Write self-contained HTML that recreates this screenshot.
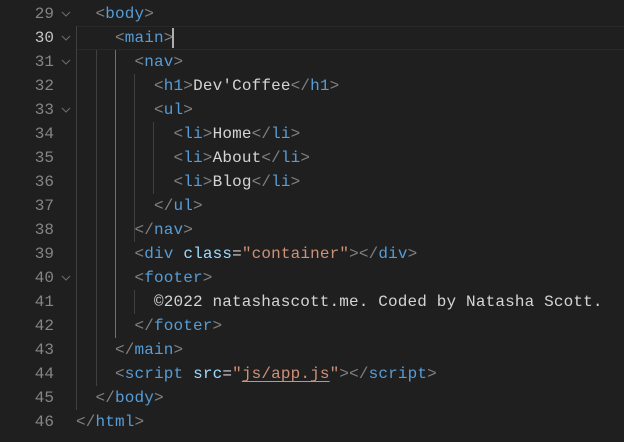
<!DOCTYPE html><html><head><style>
body{margin:0;width:624px;height:442px;background:#1f1f1f;overflow:hidden;position:relative;font-family:"Liberation Mono",monospace;font-size:16px}
.l{position:absolute;left:0;height:24px;line-height:24px;white-space:pre;width:624px}
.n{position:absolute;right:570px;color:#858585;text-align:right}
.c{position:absolute;left:76px;color:#d4d4d4;letter-spacing:0.15px}
.f{position:absolute;left:61px;top:9px;width:10px;height:6px}
.p{color:#808080}.t{color:#569cd6}.a{color:#9cdcfe}.s{color:#ce9178}
.g{position:absolute;width:1px;background:#404040}
</style></head><body>
<div style="position:absolute;left:76px;top:26px;width:548px;height:22px;border-top:1px solid #282828;border-bottom:1px solid #282828"></div>
<div class="g" style="left:76px;top:26px;height:384px"></div>
<div class="g" style="left:96px;top:50px;height:336px"></div>
<div class="g" style="left:115px;top:50px;height:288px;background:#707070"></div>
<div class="g" style="left:134px;top:74px;height:168px"></div>
<div class="g" style="left:134px;top:290px;height:24px"></div>
<div class="g" style="left:153px;top:122px;height:72px"></div>
<svg width="0" height="0" style="position:absolute"><defs><symbol id="ch" viewBox="0 0 10 6"><path d="M1 1L5 5L9 1" fill="none" stroke="#6e6e6e" stroke-width="1"/></symbol></defs></svg>
<div class="l" style="top:2px"><span class="n">29</span><svg class="f"><use href="#ch"/></svg><span class="c">  <span class="p">&lt;</span><span class="t">body</span><span class="p">&gt;</span></span></div>
<div class="l" style="top:26px"><span class="n" style="color:#c6c6c6">30</span><svg class="f"><use href="#ch"/></svg><span class="c">    <span class="p">&lt;</span><span class="t">main</span><span class="p">&gt;</span></span><div style="position:absolute;left:172px;top:2px;width:2px;height:20px;background:#aeafad"></div></div>
<div class="l" style="top:50px"><span class="n">31</span><svg class="f"><use href="#ch"/></svg><span class="c">      <span class="p">&lt;</span><span class="t">nav</span><span class="p">&gt;</span></span></div>
<div class="l" style="top:74px"><span class="n">32</span><span class="c">        <span class="p">&lt;</span><span class="t">h1</span><span class="p">&gt;</span>Dev'Coffee<span class="p">&lt;/</span><span class="t">h1</span><span class="p">&gt;</span></span></div>
<div class="l" style="top:98px"><span class="n">33</span><svg class="f"><use href="#ch"/></svg><span class="c">        <span class="p">&lt;</span><span class="t">ul</span><span class="p">&gt;</span></span></div>
<div class="l" style="top:122px"><span class="n">34</span><span class="c">          <span class="p">&lt;</span><span class="t">li</span><span class="p">&gt;</span>Home<span class="p">&lt;/</span><span class="t">li</span><span class="p">&gt;</span></span></div>
<div class="l" style="top:146px"><span class="n">35</span><span class="c">          <span class="p">&lt;</span><span class="t">li</span><span class="p">&gt;</span>About<span class="p">&lt;/</span><span class="t">li</span><span class="p">&gt;</span></span></div>
<div class="l" style="top:170px"><span class="n">36</span><span class="c">          <span class="p">&lt;</span><span class="t">li</span><span class="p">&gt;</span>Blog<span class="p">&lt;/</span><span class="t">li</span><span class="p">&gt;</span></span></div>
<div class="l" style="top:194px"><span class="n">37</span><span class="c">        <span class="p">&lt;/</span><span class="t">ul</span><span class="p">&gt;</span></span></div>
<div class="l" style="top:218px"><span class="n">38</span><span class="c">      <span class="p">&lt;/</span><span class="t">nav</span><span class="p">&gt;</span></span></div>
<div class="l" style="top:242px"><span class="n">39</span><span class="c">      <span class="p">&lt;</span><span class="t">div</span> <span class="a">class</span>=<span class="s">"container"</span><span class="p">&gt;&lt;/</span><span class="t">div</span><span class="p">&gt;</span></span></div>
<div class="l" style="top:266px"><span class="n">40</span><svg class="f"><use href="#ch"/></svg><span class="c">      <span class="p">&lt;</span><span class="t">footer</span><span class="p">&gt;</span></span></div>
<div class="l" style="top:290px"><span class="n">41</span><span class="c">        ©2022 natashascott.me. Coded by Natasha Scott.</span></div>
<div class="l" style="top:314px"><span class="n">42</span><span class="c">      <span class="p">&lt;/</span><span class="t">footer</span><span class="p">&gt;</span></span></div>
<div class="l" style="top:338px"><span class="n">43</span><span class="c">    <span class="p">&lt;/</span><span class="t">main</span><span class="p">&gt;</span></span></div>
<div class="l" style="top:362px"><span class="n">44</span><span class="c">    <span class="p">&lt;</span><span class="t">script</span> <span class="a">src</span>=<span class="s">"<span style="text-decoration:underline;text-underline-offset:3px">js/app.js</span>"</span><span class="p">&gt;&lt;/</span><span class="t">script</span><span class="p">&gt;</span></span></div>
<div class="l" style="top:386px"><span class="n">45</span><span class="c">  <span class="p">&lt;/</span><span class="t">body</span><span class="p">&gt;</span></span></div>
<div class="l" style="top:410px"><span class="n">46</span><span class="c"><span class="p">&lt;/</span><span class="t">html</span><span class="p">&gt;</span></span></div>
</body></html>
